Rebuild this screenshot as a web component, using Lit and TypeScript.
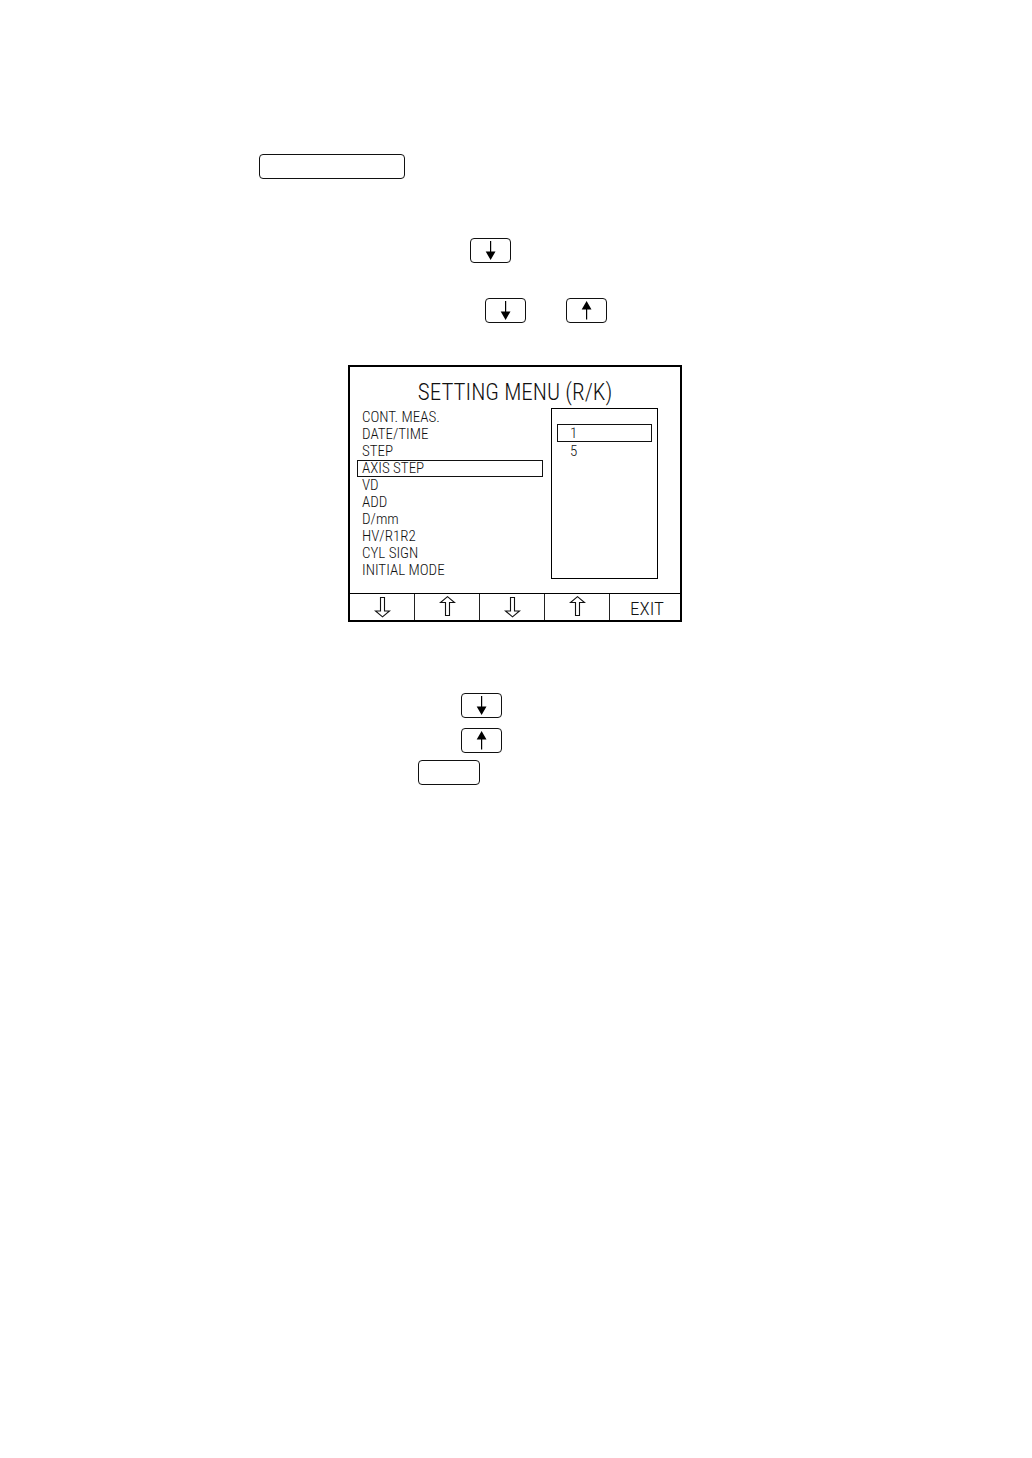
import { LitElement, html, svg, css } from "lit";
import { customElement, property, state } from "lit/decorators.js";
import { classMap } from "lit/directives/class-map.js";

type Direction = "up" | "down";

const MENU = [
  "CONT. MEAS.",
  "DATE/TIME",
  "STEP",
  "AXIS STEP",
  "VD",
  "ADD",
  "D/mm",
  "HV/R1R2",
  "CYL SIGN",
  "INITIAL MODE",
];
const VALUES = ["1", "5"];
const SOFT_KEYS: Direction[] = ["down", "up", "down", "up"];

/** A physical key of the instrument, blank or with an arrow. */
@customElement("panel-key")
export class PanelKey extends LitElement {
  @property() arrow: Direction | "" = "";
  @property() label = "";

  static styles = css`
    :host {
      display: flex;
      height: 25px;
    }
    .key {
      flex: 1;
      display: flex;
      align-items: center;
      justify-content: center;
      margin: 0;
      padding: 0;
      border: 1px solid #111;
      border-radius: 4px;
      background: #fff;
      color: #000;
    }
    .glyph {
      display: block;
      width: 11px;
      height: 19px;
    }
  `;

  render() {
    const shape =
      this.arrow === "down"
        ? svg`<path d="M5 0h1.2v10.5H10.5L5.6 19 .7 10.5H5z" fill="currentColor" />`
        : svg`<path d="M5.6 0L10.5 8.5H6.2V18.5H5V8.5H.7z" fill="currentColor" />`;
    return html`<button class="key" type="button" aria-label=${this.label}>
      ${this.arrow
        ? html`<svg class="glyph" viewBox="0 0 11 19" aria-hidden="true">${shape}</svg>`
        : ""}
    </button>`;
  }
}

/** The instrument's monitor showing the setting menu. */
@customElement("setting-screen")
export class SettingScreen extends LitElement {
  @state() private item = 3;
  @state() private value = 0;

  static styles = css`
    :host {
      display: block;
      box-sizing: border-box;
      border: 2px solid #000;
      background: #fff;
      color: #111;
      font-family: "Roboto Condensed", "Liberation Sans", sans-serif;
      font-size: 15px;
      font-weight: 300;
      line-height: 17px;
    }
    button {
      margin: 0;
      padding: 0;
      border: 0;
      background: none;
      color: inherit;
      font: inherit;
    }
    .title {
      margin: 0;
      padding-top: 10px;
      font-size: 23px;
      font-weight: 300;
      line-height: 31px;
      text-align: center;
    }
    .body {
      display: flex;
      justify-content: space-between;
      padding: 0 22px 14px 7px;
    }
    .list {
      margin: 0;
      padding: 0;
      list-style: none;
    }
    .menu {
      flex: 0 1 186px;
      padding-top: 1px;
    }
    .values {
      flex: 0 1 107px;
      box-sizing: border-box;
      padding: 15px 5px;
      border: 1px solid #000;
    }
    .option {
      display: block;
      box-sizing: border-box;
      width: 100%;
      height: 17px;
      padding: 0 4px;
      border: 1px solid transparent;
      line-height: 15px;
      text-align: left;
      white-space: nowrap;
    }
    .values .option {
      height: 18px;
      padding: 0 12px;
      line-height: 17px;
    }
    .option.selected {
      border-color: #111;
    }
    .softkeys {
      display: grid;
      grid-template-columns: repeat(4, 65fr) 70fr;
      height: 27px;
      border-top: 1px solid #000;
      box-sizing: border-box;
    }
    .softkey {
      display: flex;
      align-items: center;
      justify-content: center;
      border-right: 1px solid #222;
    }
    .softkey:last-child {
      border-right: 0;
      padding: 3px 0 0 4px;
      font-size: 19px;
    }
    .hollow {
      display: block;
      width: 17px;
      height: 22px;
      fill: none;
      stroke: #111;
      stroke-width: 1.1;
    }
  `;

  private hollowArrow(direction: Direction) {
    const d =
      direction === "down"
        ? "M6.5 1.5h4v13.5H15.5L8.5 20.8 1.5 15H6.5z"
        : "M6.5 19.5h4V6.5H15.5L8.5 .7 1.5 6.5H6.5z";
    return html`<svg class="hollow" viewBox="0 0 17 22" aria-hidden="true">
      ${svg`<path d=${d} />`}
    </svg>`;
  }

  private move(column: number, direction: Direction) {
    const step = direction === "down" ? 1 : -1;
    if (column < 2) {
      this.item = (this.item + step + MENU.length) % MENU.length;
    } else {
      this.value = (this.value + step + VALUES.length) % VALUES.length;
    }
  }

  private options(texts: string[], current: number, pick: (i: number) => void) {
    return texts.map(
      (text, i) => html`<li>
        <button
          type="button"
          class=${classMap({ option: true, selected: i === current })}
          @click=${() => pick(i)}
        >${text}</button>
      </li>`,
    );
  }

  render() {
    return html`
      <h1 class="title">SETTING MENU (R/K)</h1>
      <div class="body">
        <ul class="list menu">
          ${this.options(MENU, this.item, (i) => (this.item = i))}
        </ul>
        <ul class="list values">
          ${this.options(VALUES, this.value, (i) => (this.value = i))}
        </ul>
      </div>
      <div class="softkeys">
        ${SOFT_KEYS.map(
          (direction, i) => html`<button
            type="button"
            class="softkey"
            aria-label=${direction}
            @click=${() => this.move(i, direction)}
          >${this.hollowArrow(direction)}</button>`,
        )}
        <button type="button" class="softkey">EXIT</button>
      </div>
    `;
  }
}

@customElement("app-root")
export class AppRoot extends LitElement {
  static styles = css`
    :host {
      display: block;
      box-sizing: border-box;
      min-height: 100vh;
      padding: 154px 16px 64px;
      background: #fff;
    }
    .sheet {
      display: flex;
      flex-direction: column;
      max-width: 514px;
      margin: 0 auto;
    }
    .row {
      display: flex;
      gap: 40px;
    }
    .first { margin-bottom: 59px; }
    .second { margin: 0 0 35px 211px; }
    .third { margin: 0 0 42px 226px; }
    .screen {
      width: 65%;
      min-width: 320px;
      margin: 0 0 71px 89px;
    }
    .fourth { margin: 0 0 10px 202px; }
    .fifth { margin: 0 0 7px 202px; }
    .sixth { margin-left: 159px; }
    .small { width: 41px; }
    .medium { width: 62px; }
    .wide { width: 146px; }
  `;

  render() {
    return html`<main class="sheet">
      <div class="row first"><panel-key class="wide" label="Menu"></panel-key></div>
      <div class="row second"><panel-key class="small" arrow="down" label="Down"></panel-key></div>
      <div class="row third">
        <panel-key class="small" arrow="down" label="Down"></panel-key>
        <panel-key class="small" arrow="up" label="Up"></panel-key>
      </div>
      <setting-screen class="screen"></setting-screen>
      <div class="row fourth"><panel-key class="small" arrow="down" label="Down"></panel-key></div>
      <div class="row fifth"><panel-key class="small" arrow="up" label="Up"></panel-key></div>
      <div class="row sixth"><panel-key class="medium" label="Exit"></panel-key></div>
    </main>`;
  }
}
